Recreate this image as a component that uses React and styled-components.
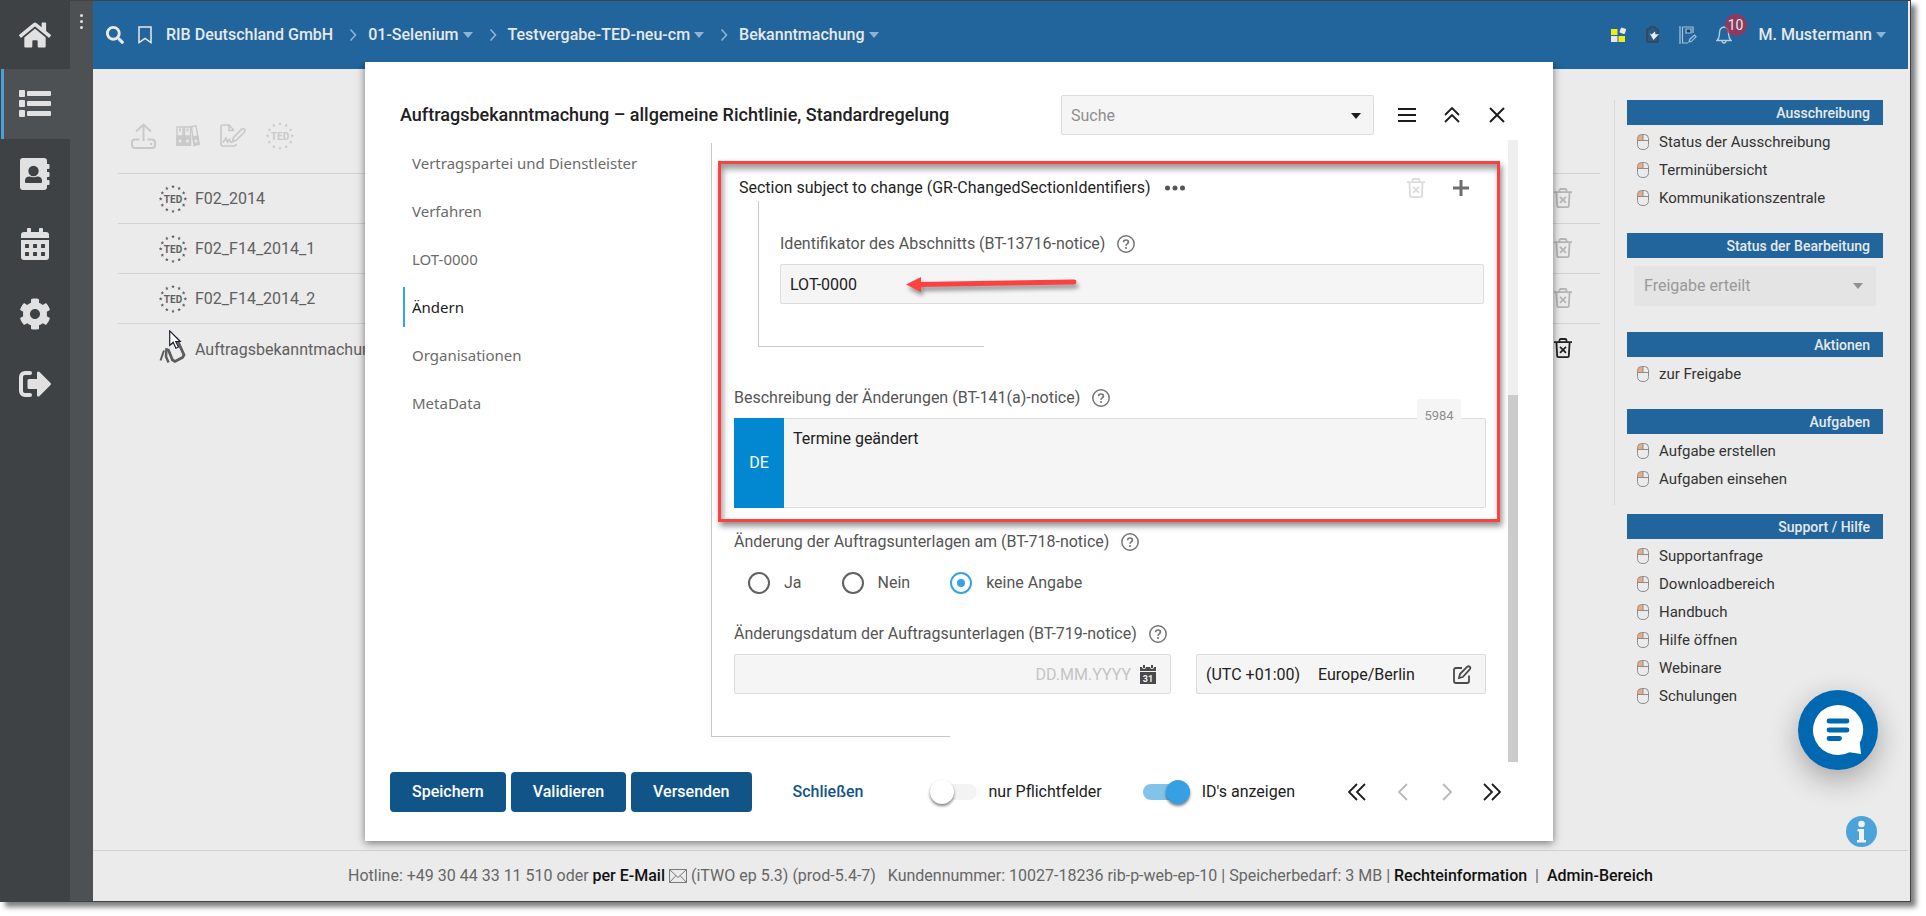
import React, { useState } from "react";
import styled, { createGlobalStyle, css } from "styled-components";
import { FaHome, FaSearch, FaCog } from "react-icons/fa";

const GlobalStyle = createGlobalStyle`
  *, *::before, *::after { box-sizing: border-box; }
  body { margin: 0; background: #fff; font-family: Roboto, "Liberation Sans", sans-serif; font-size: 16px; line-height: 24px; color: #212121; }
  button, input, select, textarea { font: inherit; color: inherit; }
  button { border: 0; background: none; padding: 0; cursor: pointer; }
  a { color: inherit; text-decoration: none; }
  ul, ol { list-style: none; margin: 0; padding: 0; }
  h1, h2, fieldset, p { margin: 0; }
  svg { display: block; flex: none; }
`;

/* ---------- shell ---------- */
const Frame = styled.div`
  position: relative;
  display: flex;
  min-height: calc(100vh - 14px);
  margin: 0 15px 14px 0;
  padding-right: 2px;
  border: 1px solid #404346;
  background: #ebebeb;
  box-shadow: 5px 5px 5px rgba(0, 0, 0, 0.5);
`;
const Sidebar = styled.nav`
  width: 69px;
  background: #3f4244;
  color: #e1e1e1;
`;
const SideLink = styled.a`
  display: flex;
  align-items: center;
  justify-content: center;
  height: ${(p) => (p.$first ? 68 : 70)}px;
  padding-right: 1px;
  ${(p) =>
    p.$active &&
    css`
      background: #4d5154;
      border-left: 3px solid #4ba0d8;
      padding-right: 4px;
    `}
`;
const Handle = styled.button`
  display: flex;
  flex-direction: column;
  align-items: center;
  gap: 3px;
  width: 23px;
  padding-top: 13px;
  background: #4d5154;
  span {
    width: 3px;
    height: 3px;
    border-radius: 50%;
    background: #e1e1e1;
  }
`;
const Page = styled.div`
  flex: 1;
  min-width: 0;
  display: flex;
  flex-direction: column;
`;
const TopBar = styled.header`
  display: flex;
  align-items: center;
  justify-content: space-between;
  height: 68px;
  padding: 0 22px 0 13px;
  background: #21659c;
  color: #e7e9eb;
  font-weight: 500;
`;
const TopGroup = styled.div`
  display: flex;
  align-items: center;
  gap: ${(p) => p.$gap}px;
`;
const Crumbs = styled.ol`
  display: flex;
  align-items: center;
  gap: 16px;
  li {
    display: flex;
    align-items: center;
    gap: 11px;
  }
`;
const CrumbButton = styled.button`
  display: flex;
  align-items: center;
  gap: 4px;
  font-weight: 500;
`;
const Badge = styled.span`
  position: absolute;
  left: 9px;
  top: -12px;
  width: 22px;
  height: 22px;
  border-radius: 50%;
  background: rgba(176, 44, 74, 0.75);
  font-size: 14px;
  line-height: 22px;
  text-align: center;
  font-weight: 400;
`;
const BellButton = styled.button`
  position: relative;
  margin-right: 8px;
`;
const Footer = styled.footer`
  height: 51px;
  border-top: 1px solid #d3d3d3;
  display: flex;
  align-items: center;
  justify-content: center;
  gap: 4px;
  color: #666;
  white-space: pre;
  a {
    color: #111;
    font-weight: 500;
  }
`;

/* ---------- page content ---------- */
const Content = styled.main`
  flex: 1;
  display: flex;
  align-items: flex-start;
  padding: 31px 25px 0 25px;
`;
const ListColumn = styled.section`
  flex: 1;
  min-width: 0;
  min-height: 405px;
  padding-right: 14px;
  border-right: 1px solid #d9d9d9;
`;
const Toolbar = styled.div`
  display: flex;
  align-items: center;
  height: 73px;
  padding: 0 0 2px 13px;
  gap: 20px;
  color: #c9c9c9;
`;
const NoticeTable = styled.table`
  width: 100%;
  border-collapse: separate;
  border-spacing: 0;
  border-top: 1px solid #d3d3d3;
  color: #606060;
  td {
    height: 50px;
    padding: 0;
    border-bottom: 1px solid #d3d3d3;
  }
  tr:last-child td {
    border-bottom: 0;
  }
  td:last-child {
    width: 46px;
    padding-bottom: 2px;
  }
`;
const NoticeLink = styled.a`
  display: flex;
  align-items: center;
  gap: 8px;
  padding: 1px 0 0 41px;
`;
const DraftIcon = styled.span`
  position: relative;
  width: 28px;
`;
const Pointer = styled.svg`
  position: absolute;
  left: 10px;
  top: -6px;
`;
const TrashButton = styled.button`
  display: block;
  color: ${(p) => (p.$strong ? "#222" : p.$faint ? "#dcdcdc" : "#b5b5b5")};
`;
const Panel = styled.aside`
  width: 256px;
  margin-left: 12px;
  display: flex;
  flex-direction: column;
  gap: 21px;
  font-size: 15px;
`;
const PanelTitle = styled.h2`
  height: 25px;
  padding-right: 13px;
  margin-bottom: 3px;
  background: #21659c;
  color: #e7e9eb;
  font-size: 14px;
  line-height: 26px;
  font-weight: 500;
  text-align: right;
`;
const PanelLink = styled.a`
  display: flex;
  align-items: center;
  gap: 10px;
  height: 28px;
  padding-left: 10px;
  color: #333;
`;
const StatusSelect = styled.div`
  display: grid;
  align-items: center;
  margin: 8px 7px 5px;
  select {
    grid-area: 1 / 1;
    appearance: none;
    height: 40px;
    padding: 0 10px;
    border: 0;
    border-radius: 2px;
    background: #e4e4e4;
    color: #999;
    font-size: 16px;
    opacity: 1;
  }
  svg {
    grid-area: 1 / 1;
    justify-self: end;
    margin-right: 13px;
    pointer-events: none;
  }
`;
const ChatButton = styled.button`
  position: absolute;
  right: 32px;
  bottom: 131px;
  width: 80px;
  height: 80px;
  border-radius: 50%;
  background: #0067b1;
  box-shadow: 0 10px 30px rgba(0, 0, 0, 0.3);
`;
const InfoButton = styled.button`
  position: absolute;
  right: 33px;
  bottom: 54px;
`;

/* ---------- dialog ---------- */
const Overlay = styled.div`
  position: absolute;
  inset: 0;
  padding: 61px 357px 60px 364px;
  display: flex;
  pointer-events: none;
`;
const Dialog = styled.section`
  flex: 1;
  min-width: 0;
  display: flex;
  flex-direction: column;
  background: #fff;
  box-shadow: 0 2px 8px rgba(0, 0, 0, 0.5);
  clip-path: inset(0 -12px -12px -12px);
  pointer-events: auto;
`;
const DialogHead = styled.header`
  display: flex;
  align-items: center;
  height: 78px;
  padding: 28px 44px 0 35px;
  gap: 21px;
`;
const Title = styled.h1`
  flex: 1;
  font-size: 18px;
  font-weight: 500;
`;
const Box = styled.div`
  display: flex;
  align-items: center;
  height: 40px;
  padding: 1px ${(p) => p.$right || 9}px 0 9px;
  border: 1px solid #dcdcdc;
  border-radius: 2px;
  background: #f5f5f5;
  width: ${(p) => (p.$width ? p.$width + "px" : "auto")};
  ${(p) => p.$grow && "flex: 1;"}
  input {
    flex: 1;
    min-width: 0;
    border: 0;
    padding: 0;
    background: none;
    outline: 0;
    text-align: ${(p) => p.$align || "left"};
  }
  input::placeholder {
    color: ${(p) => p.$hint || "#8e8e8e"};
    opacity: 1;
  }
`;
const IconButton = styled.button`
  display: flex;
  align-items: center;
  justify-content: center;
  width: 24px;
  height: 24px;
  color: ${(p) => (p.$dim ? "#b9b9b9" : "#1c1c1c")};
`;
const DialogBody = styled.div`
  flex: 1;
  display: flex;
  padding-right: 35px;
`;
const Steps = styled.nav`
  width: 346px;
  padding: 3px 0 0 38px;
  display: flex;
  flex-direction: column;
  gap: 8px;
  font-family: "Noto Sans", "Liberation Sans", sans-serif;
  font-size: 15px;
`;
const Step = styled.a`
  height: 40px;
  line-height: 40px;
  padding-left: 7px;
  border-left: 2px solid ${(p) => (p.$active ? "#36a3e4" : "transparent")};
  color: ${(p) => (p.$active ? "#1c1c1c" : "#6b6b6b")};
`;
const Form = styled.form`
  flex: 1;
  min-width: 0;
  padding-top: 3px;
`;
const FormFrame = styled.div`
  border-left: 1px solid #c8c8c8;
  padding: 18px 0 42px;
`;
const CornerLine = styled.div`
  height: 1px;
  width: ${(p) => p.$width}%;
  background: #c8c8c8;
`;
const Highlight = styled.div`
  margin: 0 8px 8px 6px;
  padding: 12px 11px 11px 13px;
  border: 3px solid #fd4141;
  box-shadow: 2px 4px 6px rgba(0, 0, 0, 0.45), inset 2px 5px 6px rgba(0, 0, 0, 0.4);
`;
const SectionHead = styled.div`
  display: flex;
  align-items: center;
  height: 24px;
  padding: 0 13px 0 5px;
  gap: 15px;
  color: #1f1f1f;
`;
const SectionTools = styled.div`
  display: flex;
  align-items: center;
  gap: 24px;
  margin-left: auto;
`;
const SubGroup = styled.div`
  margin: 1px 0 39px 24px;
`;
const SubFrame = styled.div`
  border-left: 1px solid #c8c8c8;
  padding: 31px 2px 42px 21px;
`;
const LabelRow = styled.div`
  display: flex;
  align-items: center;
  gap: 12px;
  margin-bottom: 8px;
  color: #555;
`;
const ArrowHost = styled.div`
  position: relative;
`;
const Arrow = styled.svg`
  position: absolute;
  left: 126px;
  top: 8px;
  overflow: visible;
  pointer-events: none;
  filter: drop-shadow(2px 4px 2px rgba(0, 0, 0, 0.4));
`;
const LangText = styled.div`
  position: relative;
  display: flex;
  height: 90px;
  textarea {
    flex: 1;
    resize: none;
    outline: 0;
    padding: 8px 9px;
    border: 1px solid #dcdcdc;
    border-left: 0;
    border-radius: 0 2px 2px 0;
    background: #f5f5f5;
  }
`;
const Lang = styled.button`
  width: 50px;
  background: #0288d1;
  color: #fff;
`;
const Counter = styled.span`
  position: absolute;
  right: 25px;
  top: -19px;
  width: 44px;
  height: 24px;
  padding-top: 5px;
  border-radius: 3px 3px 0 0;
  background: #f5f5f5;
  color: #8e8e8e;
  font-size: 13px;
  text-align: center;
`;
const Fields = styled.div`
  padding: 0 22px;
`;
const Radios = styled.fieldset`
  display: flex;
  gap: 40px;
  height: 24px;
  margin: 17px 0 27px;
  padding: 0 0 0 14px;
  border: 0;
  color: #555;
  label {
    display: flex;
    align-items: center;
    gap: 14px;
  }
  input {
    appearance: none;
    display: grid;
    place-items: center;
    width: 22px;
    height: 22px;
    margin: 0;
    border: 2px solid #616161;
    border-radius: 50%;
  }
  input:checked {
    border-color: #36a3e4;
  }
  input:checked::before {
    content: "";
    width: 8px;
    height: 8px;
    border-radius: 50%;
    background: #36a3e4;
  }
`;
const Pair = styled.div`
  display: flex;
  gap: 25px;
`;
const DateButton = styled.button`
  margin-left: 9px;
`;
const Zone = styled.span`
  margin-right: 18px;
`;
const ZoneButton = styled.button`
  margin-left: auto;
`;
const ScrollTrack = styled.div`
  width: 10px;
  background: #efefef;
  display: flex;
  flex-direction: column;
  justify-content: flex-end;
`;
const ScrollThumb = styled.div`
  height: 59%;
  background: #cbcbcb;
`;
const DialogFoot = styled.footer`
  display: flex;
  align-items: flex-start;
  height: 79px;
  padding: 10px 49px 0 25px;
  gap: 5px;
`;
const Primary = styled.button`
  height: 40px;
  padding: 0 22px;
  border-radius: 4px;
  background: #115588;
  color: #fff;
  font-weight: 500;
`;
const TextButton = styled.button`
  height: 40px;
  margin: 0 61px 0 36px;
  color: #115588;
  font-weight: 500;
`;
const Toggle = styled.label`
  display: flex;
  align-items: center;
  gap: 12px;
  height: 40px;
  margin-right: 36px;
  input {
    appearance: none;
    display: flex;
    align-items: center;
    width: 47px;
    height: 16px;
    margin: 0;
    border-radius: 8px;
    background: #f3f3f3;
  }
  input::before {
    content: "";
    width: 24px;
    height: 24px;
    border-radius: 50%;
    background: #fff;
    box-shadow: 0 2px 3px rgba(0, 0, 0, 0.5);
  }
  input:checked {
    background: #82c4e8;
    justify-content: flex-end;
  }
  input:checked::before {
    background: #36a0e4;
  }
`;
const Pager = styled.div`
  display: flex;
  align-items: center;
  height: 40px;
  gap: 21px;
  margin-left: auto;
`;

/* ---------- icons ---------- */
const Caret = ({ size = 10, color = "#8fb2cf" }) => (
  <svg width={size} height={size / 2 + 1} viewBox="0 0 10 6" aria-hidden="true">
    <path d="M0 0h10L5 6z" fill={color} />
  </svg>
);
const Chevron = () => (
  <svg width="8" height="14" viewBox="0 0 8 14" aria-hidden="true">
    <path d="M1.5 1.5 6.5 7l-5 5.5" fill="none" stroke="#8fb2cf" strokeWidth="1.6" />
  </svg>
);
const ListIcon = () => (
  <svg width="32" height="28" viewBox="0 0 32 28" fill="currentColor">
    {[0, 10, 20].map((y) => (
      <g key={y}>
        <rect y={y} width="6" height="7" rx="1" />
        <rect x="8" y={y + 1} width="24" height="5" rx="1" />
      </g>
    ))}
  </svg>
);
const BookIcon = () => (
  <svg width="30" height="32" viewBox="0 0 30 32">
    <path
      fill="currentColor"
      d="M3 0h21a3 3 0 0 1 3 3v3h1.5a1 1 0 0 1 1 1v3a1 1 0 0 1-1 1H27v3h1.5a1 1 0 0 1 1 1v3a1 1 0 0 1-1 1H27v3h1.5a1 1 0 0 1 1 1v3a1 1 0 0 1-1 1H27v2a3 3 0 0 1-3 3H3a3 3 0 0 1-3-3V3a3 3 0 0 1 3-3z"
    />
    <circle cx="13.5" cy="13" r="5.2" fill="#3f4244" />
    <path d="M5 24v-1.5C5 20 7 18.5 9.5 18.5c2.5 1 5.5 1 8 0 2.5 0 4.5 1.5 4.5 4V24q0 1-1 1H6q-1 0-1-1z" fill="#3f4244" />
  </svg>
);
const CalendarIcon = () => (
  <svg width="28" height="32" viewBox="0 0 28 32">
    <path fill="currentColor" d="M3 4h3V1a1 1 0 0 1 1-1h2a1 1 0 0 1 1 1v3h8V1a1 1 0 0 1 1-1h2a1 1 0 0 1 1 1v3h3a3 3 0 0 1 3 3v3H0V7a3 3 0 0 1 3-3z" />
    <path fill="currentColor" d="M0 12h28v17a3 3 0 0 1-3 3H3a3 3 0 0 1-3-3z" />
    {[4, 12, 20].map((x) => (
      <g key={x} fill="#3f4244">
        <rect x={x} y="16" width="4" height="4" rx=".6" />
        <rect x={x} y="24" width="4" height="4" rx=".6" />
      </g>
    ))}
  </svg>
);
const LogoutIcon = () => (
  <svg width="32" height="26" viewBox="0 0 32 26">
    <path d="M11 2H6a4 4 0 0 0-4 4v14a4 4 0 0 0 4 4h5" fill="none" stroke="currentColor" strokeWidth="4" strokeLinecap="round" />
    <path d="M10 8h8V2c0-1.600 1.5-2 2.6-1L31.5 12a1.5 1.5 0 0 1 0 2L20.600 25c-1.100 1-2.600.6-2.600-1v-6h-8q-1.500 0-1.500-1.500v-7Q8.500 8 10 8z" fill="currentColor" />
  </svg>
);
const BookmarkIcon = () => (
  <svg width="14" height="18" viewBox="0 0 14 18">
    <path d="M1 1h12v15.500L7 12.500 1 16.500z" fill="none" stroke="currentColor" strokeWidth="1.5" />
  </svg>
);
const STAR = "0,-2.1 .6,-.7 2,-.7 .9,.3 1.3,1.8 0,.9 -1.3,1.8 -.9,.3 -2,-.7 -.6,-.7";
const TedIcon = () => (
  <svg width="28" height="28" viewBox="0 0 28 28" fill="currentColor" role="img" aria-label="TED">
    {Array.from({ length: 12 }, (_, i) => {
      const a = (i * Math.PI) / 6;
      return <polygon key={i} points={STAR} transform={`translate(${14 + 12.3 * Math.sin(a)} ${14 - 12.3 * Math.cos(a)}) scale(.9)`} />;
    })}
    <text x="14" y="17.500" fontSize="10" fontWeight="700" textAnchor="middle">TED</text>
  </svg>
);
const UploadIcon = () => (
  <svg width="25" height="26" viewBox="0 0 25 26" fill="none" stroke="currentColor" strokeWidth="2">
    <path d="M12.5 18V2M5 8.5 12.5 1.500 20 8.500" />
    <path d="M8.500 16.500H4q-3 0-3 3V22q0 3 3 3h17q3 0 3-3v-2.500q0-3-3-3h-4.500" />
    <path d="M19 21h2" />
  </svg>
);
const BindersIcon = () => (
  <svg width="24" height="22" viewBox="0 0 24 22" fill="none" stroke="currentColor" strokeWidth="1.4">
    <path d="M1 2h6v18H1zM8.500 2h6v18h-6zM15.500 1.800l4.500-1 3 18.500-5 1z" />
    <path d="M1 11h13.500v9H1zM17 12l5-1 1 8.300-4.800 1z" fill="currentColor" />
    <path d="M3 5h2M10.500 5h2" strokeWidth="3" />
    <circle cx="4" cy="16" r="1.5" fill="#ebebeb" stroke="none" />
    <circle cx="11.500" cy="16" r="1.5" fill="#ebebeb" stroke="none" />
    <circle cx="20" cy="16" r="1.5" fill="#ebebeb" stroke="none" />
  </svg>
);
const SignIcon = () => (
  <svg width="26" height="23" viewBox="0 0 26 23" fill="none" stroke="currentColor" strokeWidth="1.6">
    <path d="M14 6.500 9 1H3Q1 1 1 3v17q0 2 2 2h11q2 0 2-2M9 1v5.500h5" />
    <path d="M3 18.500 6 14l1.500 4 2-2.500 1 2.500h2" />
    <path d="m12.500 17.500 1-4 8.500-8.500q1.500-.8 2.500.2t.2 2.500l-8.500 8.500z" />
  </svg>
);
const TrashIcon = () => (
  <svg width="18" height="20" viewBox="0 0 18 20" fill="none" stroke="currentColor" strokeWidth="1.8">
    <path d="M0 4.200h18M5.500 4V2.500Q5.500 1 7 1h4q1.500 0 1.500 1.500V4M2.400 4.200l.8 14q.1.900 1 .9h9.600q.9 0 1-.9l.8-14" />
    <path d="m6 8.800 6 6M12 8.800l-6 6" />
  </svg>
);
const DraftGlyph = () => (
  <svg width="28" height="28" viewBox="0 0 28 28" fill="none" stroke="#5c5c5c" strokeWidth="2.8">
    <path d="m11 8 7-4.500L25 19l-1.500 2.500L16 25.500 13.500 24 9 13" />
    <path d="m7.500 12-.5 8.500 2.500 6" strokeWidth="2.4" />
    <path d="M5 14.500 1.500 24.500" strokeWidth="2" />
  </svg>
);
const MouseIcon = () => (
  <svg width="12" height="16" viewBox="0 0 12 16" fill="none" stroke="#8c8c8c" strokeWidth="1">
    <path d="M1 6V4q0-3 3-3h2v5z" fill="#eeaa7c" stroke="none" />
    <path d="M.5 4.500q0-4 4-4h3q4 0 4 4v6q0 5-5.500 5t-5.500-5zM.5 6.500h11M6 .5v6" />
  </svg>
);
const HelpIcon = () => (
  <svg width="18" height="18" viewBox="0 0 18 18" role="img" aria-label="Hilfe">
    <circle cx="9" cy="9" r="8.2" fill="none" stroke="#757575" strokeWidth="1.5" />
    <path d="M6.600 7.200Q6.600 5 9 5t2.400 2q0 1.100-1.200 1.900Q9 9.700 9 10.800" fill="none" stroke="#757575" strokeWidth="1.7" />
    <circle cx="9" cy="13" r="1.1" fill="#757575" />
  </svg>
);
const Stroke = ({ w = 18, h = 18, d, sw = 2 }) => (
  <svg width={w} height={h} viewBox={`0 0 ${w} ${h}`} fill="none" stroke="currentColor" strokeWidth={sw} aria-hidden="true">
    <path d={d} />
  </svg>
);
const DateIcon = () => (
  <svg width="16" height="19" viewBox="0 0 16 19">
    <path d="M0 2h2q0 2 2 2t2-2h4q0 2 2 2t2-2h2v4H0zM3 0h2v3H3zM11 0h2v3h-2zM0 7h16v12H0z" fill="#4a4a4a" />
    <text x="8" y="16.500" fontSize="9" fontWeight="700" fill="#f5f5f5" textAnchor="middle">31</text>
  </svg>
);
const AppsIcon = () => (
  <svg width="16" height="16" viewBox="0 0 16 16">
    <rect y="2" width="6.5" height="6" fill="#f2ec14" />
    <rect y="9" width="6.5" height="6" fill="#e8e8e8" />
    <rect x="7.5" y="9" width="6.5" height="6" fill="#f2ec14" />
    <rect x="9" y="1" width="5.5" height="5.5" rx="1" fill="#e8e8e8" transform="rotate(20 11.5 4)" />
  </svg>
);
const ClipIcon = () => (
  <svg width="14" height="18" viewBox="0 0 14 18">
    <path d="M2 3h1l2-2.500h3L10 3h1q1 0 1 1v11q0 1-1 1H2q-1 0-1-1V4q0-1 1-1z" fill="#245a87" stroke="#344a5c" strokeWidth="1.8" />
    <path d="m3.500 7 2 1.500L9 5.500l.5 3L13 8l-5.500 6z" fill="#e8edf1" />
  </svg>
);
const PlanIcon = () => (
  <svg width="18" height="18" viewBox="0 0 18 18" fill="none" stroke="#a9c3d9" strokeWidth="1.2">
    <path d="M1 0v18M3.500 1v16H9M3.500 1H14v6" />
    <path d="M7 3h5v4H7z" fill="#1d3e5c" />
    <path d="m10 16 .8-2.800L15.500 9l1.500 1.800-4.500 4.500z" />
  </svg>
);
const BellIcon = () => (
  <svg width="16" height="18" viewBox="0 0 16 18" fill="none" stroke="#b7cbdc" strokeWidth="1.3">
    <path d="M8 1Q3.500 1.500 3.500 7 3.500 12 1 14.500h14Q12.500 12 12.500 7 12.500 1.500 8 1zM6 14.500q0 2.500 2 2.500t2-2.500" />
  </svg>
);
const MailIcon = () => (
  <svg width="18" height="14" viewBox="0 0 18 14" fill="none" stroke="#7a7a7a" strokeWidth="1">
    <path d="M.5.5h17v13H.5zM.5.5 9 8.500l8.500-8M.5 13.500l6.500-7M17.500 13.500 11 6.500" />
  </svg>
);

/* ---------- data ---------- */
const notices = ["F02_2014", "F02_F14_2014_1", "F02_F14_2014_2"];
const steps = ["Vertragspartei und Dienstleister", "Verfahren", "LOT-0000", "Ändern", "Organisationen", "MetaData"];

const PanelGroup = ({ title, items, children }) => (
  <section>
    <PanelTitle>{title}</PanelTitle>
    {items && (
      <ul>
        {items.map((t) => (
          <li key={t}>
            <PanelLink href="#">
              <MouseIcon />
              {t}
            </PanelLink>
          </li>
        ))}
      </ul>
    )}
    {children}
  </section>
);

function NoticeDialog() {
  const [change, setChange] = useState("keine Angabe");
  const [text, setText] = useState("Termine geändert");
  return (
    <Dialog role="dialog" aria-labelledby="dlg-title">
      <DialogHead>
        <Title id="dlg-title">Auftragsbekanntmachung – allgemeine Richtlinie, Standardregelung</Title>
        <Box $width={313} $right={12}>
          <input type="text" placeholder="Suche" aria-label="Suche" />
          <Caret color="#1c1c1c" />
        </Box>
        <IconButton aria-label="Menü"><Stroke h={16} d="M0 2h18M0 8h18M0 14h18" sw={2.2} /></IconButton>
        <IconButton aria-label="Nach oben"><Stroke w={16} d="m1 9 7-7 7 7M1 16l7-7 7 7" sw={1.8} /></IconButton>
        <IconButton aria-label="Dialog schließen"><Stroke w={16} h={16} d="m1 1 14 14M15 1 1 15" /></IconButton>
      </DialogHead>
      <DialogBody>
        <Steps aria-label="Abschnitte">
          {steps.map((s) => (
            <Step key={s} href="#" $active={s === "Ändern"}>{s}</Step>
          ))}
        </Steps>
        <Form onSubmit={(e) => e.preventDefault()}>
          <FormFrame>
            <Highlight>
              <SectionHead>
                <span>Section subject to change (GR-ChangedSectionIdentifiers)</span>
                <button type="button" aria-label="Weitere Optionen">
                  <svg width="20" height="6" viewBox="0 0 20 6" fill="#555">
                    <circle cx="2.5" cy="3" r="2.5" /><circle cx="10" cy="3" r="2.5" /><circle cx="17.5" cy="3" r="2.5" />
                  </svg>
                </button>
                <SectionTools>
                  <TrashButton type="button" $faint aria-label="Abschnitt löschen"><TrashIcon /></TrashButton>
                  <IconButton type="button" aria-label="Abschnitt hinzufügen">
                    <svg width="16" height="16" viewBox="0 0 16 16"><path d="M8 0v16M0 8h16" stroke="#6e6e6e" strokeWidth="3" /></svg>
                  </IconButton>
                </SectionTools>
              </SectionHead>
              <SubGroup>
                <SubFrame>
                  <LabelRow>
                    <label htmlFor="bt13716">Identifikator des Abschnitts (BT-13716-notice)</label>
                    <HelpIcon />
                  </LabelRow>
                  <ArrowHost>
                    <Box><input id="bt13716" type="text" defaultValue="LOT-0000" /></Box>
                    <Arrow width="172" height="24" viewBox="0 0 172 24" aria-hidden="true">
                      <path d="M12 12.500 168 10" stroke="#fd4141" strokeWidth="5" strokeLinecap="round" />
                      <path d="M0 12.500 15 5v15z" fill="#fd4141" />
                    </Arrow>
                  </ArrowHost>
                </SubFrame>
                <CornerLine $width={31} />
              </SubGroup>
              <LabelRow>
                <label htmlFor="bt141">Beschreibung der Änderungen (BT-141(a)-notice)</label>
                <HelpIcon />
              </LabelRow>
              <LangText>
                <Lang type="button">DE</Lang>
                <textarea id="bt141" value={text} onChange={(e) => setText(e.target.value)} />
                <Counter>{6000 - text.length}</Counter>
              </LangText>
            </Highlight>
            <Fields>
              <LabelRow>
                <span id="bt718">Änderung der Auftragsunterlagen am (BT-718-notice)</span>
                <HelpIcon />
              </LabelRow>
              <Radios aria-labelledby="bt718">
                {["Ja", "Nein", "keine Angabe"].map((o) => (
                  <label key={o}>
                    <input type="radio" name="bt718" checked={change === o} onChange={() => setChange(o)} />
                    {o}
                  </label>
                ))}
              </Radios>
              <LabelRow>
                <label htmlFor="bt719">Änderungsdatum der Auftragsunterlagen (BT-719-notice)</label>
                <HelpIcon />
              </LabelRow>
              <Pair>
                <Box $grow $right={14} $align="right" $hint="#c4c4c4">
                  <input id="bt719" type="text" placeholder="DD.MM.YYYY" />
                  <DateButton type="button" aria-label="Kalender öffnen"><DateIcon /></DateButton>
                </Box>
                <Box $width={290} $right={13}>
                  <Zone>(UTC +01:00)</Zone>
                  <span>Europe/Berlin</span>
                  <ZoneButton type="button" aria-label="Zeitzone bearbeiten">
                    <svg width="19" height="19" viewBox="0 0 19 19" fill="none" stroke="#4a4a4a" strokeWidth="1.8">
                      <path d="M9 3H3Q1 3 1 5v11q0 2 2 2h11q2 0 2-2v-5.500" />
                      <path d="m6 13 1-4 7.300-7.300q1.200-1 2.400 0 1.200 1.300.2 2.500L9.800 12z" />
                    </svg>
                  </ZoneButton>
                </Box>
              </Pair>
            </Fields>
          </FormFrame>
          <CornerLine $width={30} />
        </Form>
        <ScrollTrack><ScrollThumb /></ScrollTrack>
      </DialogBody>
      <DialogFoot>
        <Primary>Speichern</Primary>
        <Primary>Validieren</Primary>
        <Primary>Versenden</Primary>
        <TextButton>Schließen</TextButton>
        <Toggle><input type="checkbox" role="switch" />nur Pflichtfelder</Toggle>
        <Toggle><input type="checkbox" role="switch" defaultChecked />ID's anzeigen</Toggle>
        <Pager>
          <IconButton aria-label="Erste"><Stroke d="M9 1 1 9l8 8M17 1 9 9l8 8" sw={1.8} /></IconButton>
          <IconButton $dim aria-label="Zurück"><Stroke w={11} d="M10 1 2 9l8 8" sw={1.8} /></IconButton>
          <IconButton $dim aria-label="Weiter"><Stroke w={11} d="m1 1 8 8-8 8" sw={1.8} /></IconButton>
          <IconButton aria-label="Letzte"><Stroke d="m1 1 8 8-8 8M9 1l8 8-8 8" sw={1.8} /></IconButton>
        </Pager>
      </DialogFoot>
    </Dialog>
  );
}

export default function App() {
  return (
    <>
      <GlobalStyle />
      <Frame>
        <Sidebar aria-label="Hauptmenü">
          <SideLink $first href="#" aria-label="Start"><FaHome size={32} /></SideLink>
          <SideLink $active href="#" aria-label="Liste"><ListIcon /></SideLink>
          <SideLink href="#" aria-label="Adressbuch"><BookIcon /></SideLink>
          <SideLink href="#" aria-label="Kalender"><CalendarIcon /></SideLink>
          <SideLink href="#" aria-label="Einstellungen"><FaCog size={32} /></SideLink>
          <SideLink href="#" aria-label="Abmelden"><LogoutIcon /></SideLink>
        </Sidebar>
        <Handle aria-label="Menü erweitern"><span /><span /><span /></Handle>
        <Page>
          <TopBar>
            <TopGroup $gap={14}>
              <button aria-label="Suchen"><FaSearch size={18} /></button>
              <button aria-label="Lesezeichen"><BookmarkIcon /></button>
              <Crumbs>
                <li><a href="#">RIB Deutschland GmbH</a></li>
                {["01-Selenium", "Testvergabe-TED-neu-cm", "Bekanntmachung"].map((c) => (
                  <li key={c}>
                    <Chevron />
                    <CrumbButton>{c}<Caret /></CrumbButton>
                  </li>
                ))}
              </Crumbs>
            </TopGroup>
            <TopGroup $gap={19}>
              <button aria-label="Apps"><AppsIcon /></button>
              <button aria-label="Aufgaben"><ClipIcon /></button>
              <button aria-label="Planung"><PlanIcon /></button>
              <BellButton aria-label="Benachrichtigungen"><BellIcon /><Badge>10</Badge></BellButton>
              <CrumbButton>M. Mustermann<Caret /></CrumbButton>
            </TopGroup>
          </TopBar>
          <Content>
            <ListColumn>
              <Toolbar>
                <UploadIcon />
                <BindersIcon />
                <SignIcon />
                <TedIcon />
              </Toolbar>
              <NoticeTable>
                <tbody>
                  {notices.map((n) => (
                    <tr key={n}>
                      <td><NoticeLink href="#"><TedIcon />{n}</NoticeLink></td>
                      <td><TrashButton aria-label={`${n} löschen`}><TrashIcon /></TrashButton></td>
                    </tr>
                  ))}
                  <tr>
                    <td>
                      <NoticeLink href="#">
                        <DraftIcon>
                          <DraftGlyph />
                          <Pointer width="14" height="20" viewBox="0 0 14 20" aria-hidden="true">
                            <path d="M.7.9v14.500l3.500-3.200 2.700 6 2.500-1.200-2.600-5.500h4.500z" fill="#fff" stroke="#1b1f30" strokeWidth="1.2" />
                          </Pointer>
                        </DraftIcon>
                        Auftragsbekanntmachung
                      </NoticeLink>
                    </td>
                    <td><TrashButton $strong aria-label="Auftragsbekanntmachung löschen"><TrashIcon /></TrashButton></td>
                  </tr>
                </tbody>
              </NoticeTable>
            </ListColumn>
            <Panel>
              <PanelGroup title="Ausschreibung" items={["Status der Ausschreibung", "Terminübersicht", "Kommunikationszentrale"]} />
              <PanelGroup title="Status der Bearbeitung">
                <StatusSelect>
                  <select disabled aria-label="Status der Bearbeitung" defaultValue="f"><option value="f">Freigabe erteilt</option></select>
                  <Caret color="#919191" />
                </StatusSelect>
              </PanelGroup>
              <PanelGroup title="Aktionen" items={["zur Freigabe"]} />
              <PanelGroup title="Aufgaben" items={["Aufgabe erstellen", "Aufgaben einsehen"]} />
              <PanelGroup title="Support / Hilfe" items={["Supportanfrage", "Downloadbereich", "Handbuch", "Hilfe öffnen", "Webinare", "Schulungen"]} />
            </Panel>
          </Content>
          <Footer>
            <span>Hotline: +49 30 44 33 11 510 oder <a href="#">per E-Mail</a></span>
            <MailIcon />
            <span>(iTWO ep 5.3) (prod-5.4-7)   Kundennummer: 10027-18236 rib-p-web-ep-10 | Speicherbedarf: 3 MB | <a href="#">Rechteinformation</a>  |  <a href="#">Admin-Bereich</a></span>
          </Footer>
        </Page>
        <ChatButton aria-label="Chat öffnen">
          <svg width="80" height="80" viewBox="0 0 80 80">
            <path d="M40 15a25 25 0 1 0 11.500 47.200L63 64l-1.200-11.500A25 25 0 0 0 40 15z" fill="#fff" />
            <path d="M31 31h18M31 40h18M31 48.500h10.500" stroke="#0067b1" strokeWidth="4.8" strokeLinecap="round" />
          </svg>
        </ChatButton>
        <InfoButton aria-label="Information">
          <svg width="31" height="31" viewBox="0 0 31 31">
            <circle cx="15.5" cy="15.5" r="15.5" fill="#4ba3da" />
            <circle cx="15.5" cy="8" r="3.3" fill="#f2f2f2" />
            <path d="M11.500 13H18v11h2v2.500h-9V24h2v-8.500h-1.500z" fill="#f2f2f2" />
          </svg>
        </InfoButton>
        <Overlay>
          <NoticeDialog />
        </Overlay>
      </Frame>
    </>
  );
}
